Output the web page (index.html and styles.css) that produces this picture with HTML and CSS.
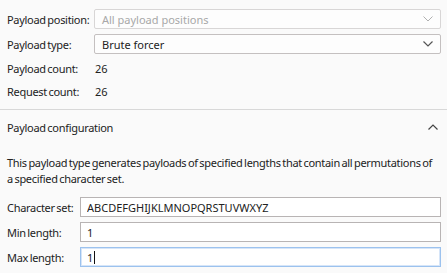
FILE: index.html
```html
<!doctype html>
<html>

<head>
    <title>Payloads</title>
    <link rel="stylesheet" href="styles.css">
</head>

<body>
    <div class="panel">
        <div class="summary">
            <label class="label">Payload position:</label>
            <div class="select disabled">
                <span>All payload positions</span>
                <svg class="chevron" width="10" height="6" viewBox="0 0 10 6"><path d="M0.5 0.5 L5 5 L9.5 0.5" fill="none" stroke="currentColor" stroke-width="1" /></svg>
            </div>

            <label class="label">Payload type:</label>
            <div class="select">
                <span>Brute forcer</span>
                <svg class="chevron" width="10" height="6" viewBox="0 0 10 6"><path d="M0.5 0.5 L5 5 L9.5 0.5" fill="none" stroke="currentColor" stroke-width="1.2" /></svg>
            </div>

            <span class="label">Payload count:</span>
            <span class="value">26</span>

            <span class="label">Request count:</span>
            <span class="value">26</span>
        </div>

        <div class="section-head">
            <span>Payload configuration</span>
            <svg class="chevron" width="10" height="6" viewBox="0 0 10 6"><path d="M0.5 5.5 L5 1 L9.5 5.5" fill="none" stroke="currentColor" stroke-width="1.2" /></svg>
        </div>

        <p class="description">This payload type generates payloads of specified lengths that contain all permutations of a specified character set.</p>

        <div class="config">
            <label class="label">Character set:</label>
            <input class="field" type="text" value="ABCDEFGHIJKLMNOPQRSTUVWXYZ">

            <label class="label">Min length:</label>
            <input class="field" type="text" value="1">

            <label class="label">Max length:</label>
            <div class="field focused"><span>1</span><span class="caret"></span></div>
        </div>
    </div>
</body>

</html>
```

FILE: styles.css
```css
html,
body {
    margin: 0;
    padding: 0;
    width: 100%;
    height: 100%;
    overflow: hidden;
    background: #fafafa;
}

* {
    box-sizing: border-box;
}

.panel {
    font-family: "Noto Sans", sans-serif;
    font-size: 11px;
    letter-spacing: -0.3px;
    word-spacing: -1px;
    color: #222;
}

.summary {
    display: grid;
    grid-template-columns: 87px 347px;
    grid-template-rows: 20px 20px 18px 18px;
    row-gap: 5px;
    align-items: center;
    padding: 9px 0 9px 7px;
    border-bottom: 1px solid #d8d8d8;
}

.label {
    white-space: nowrap;
}

.value {
    padding-left: 1px;
    letter-spacing: 0;
}

.select {
    display: flex;
    align-items: center;
    justify-content: space-between;
    height: 20px;
    padding: 0 7px 0 7px;
    border: 1px solid #c4c0c0;
    border-radius: 2px;
    background: #fdfdfd;
    font-size: 11px;
    letter-spacing: 0;
    word-spacing: 0;
    color: #222;
}

.select.disabled {
    color: #a8a8a8;
    border-color: #d8d6d6;
}

.select .chevron {
    color: #555;
}

.select.disabled .chevron {
    color: #b0b0b0;
}

.section-head {
    display: flex;
    align-items: center;
    justify-content: space-between;
    height: 34px;
    padding: 0 9px 0 7px;
}

.section-head .chevron {
    color: #444;
}

.description {
    margin: 11px 0 10px;
    padding: 0 8px 0 7px;
    line-height: 16px;
}

.config {
    display: grid;
    grid-template-columns: 73px 361px;
    grid-auto-rows: 20px;
    row-gap: 5px;
    align-items: center;
    padding-left: 7px;
}

.field {
    display: flex;
    align-items: center;
    height: 20px;
    width: 100%;
    margin: 0;
    padding: 0 6px;
    border: 1px solid #b8b4b4;
    border-radius: 0;
    background: #fff;
    font-family: "Noto Sans", sans-serif;
    font-size: 11px;
    letter-spacing: 0;
    word-spacing: 0;
    color: #222;
    outline: none;
}

.field.focused {
    border-color: #9cc2ee;
    box-shadow: inset 0 0 0 1px #d6e5f8;
}

.caret {
    width: 1px;
    height: 13px;
    margin-left: 1px;
    background: #111;
}
```
